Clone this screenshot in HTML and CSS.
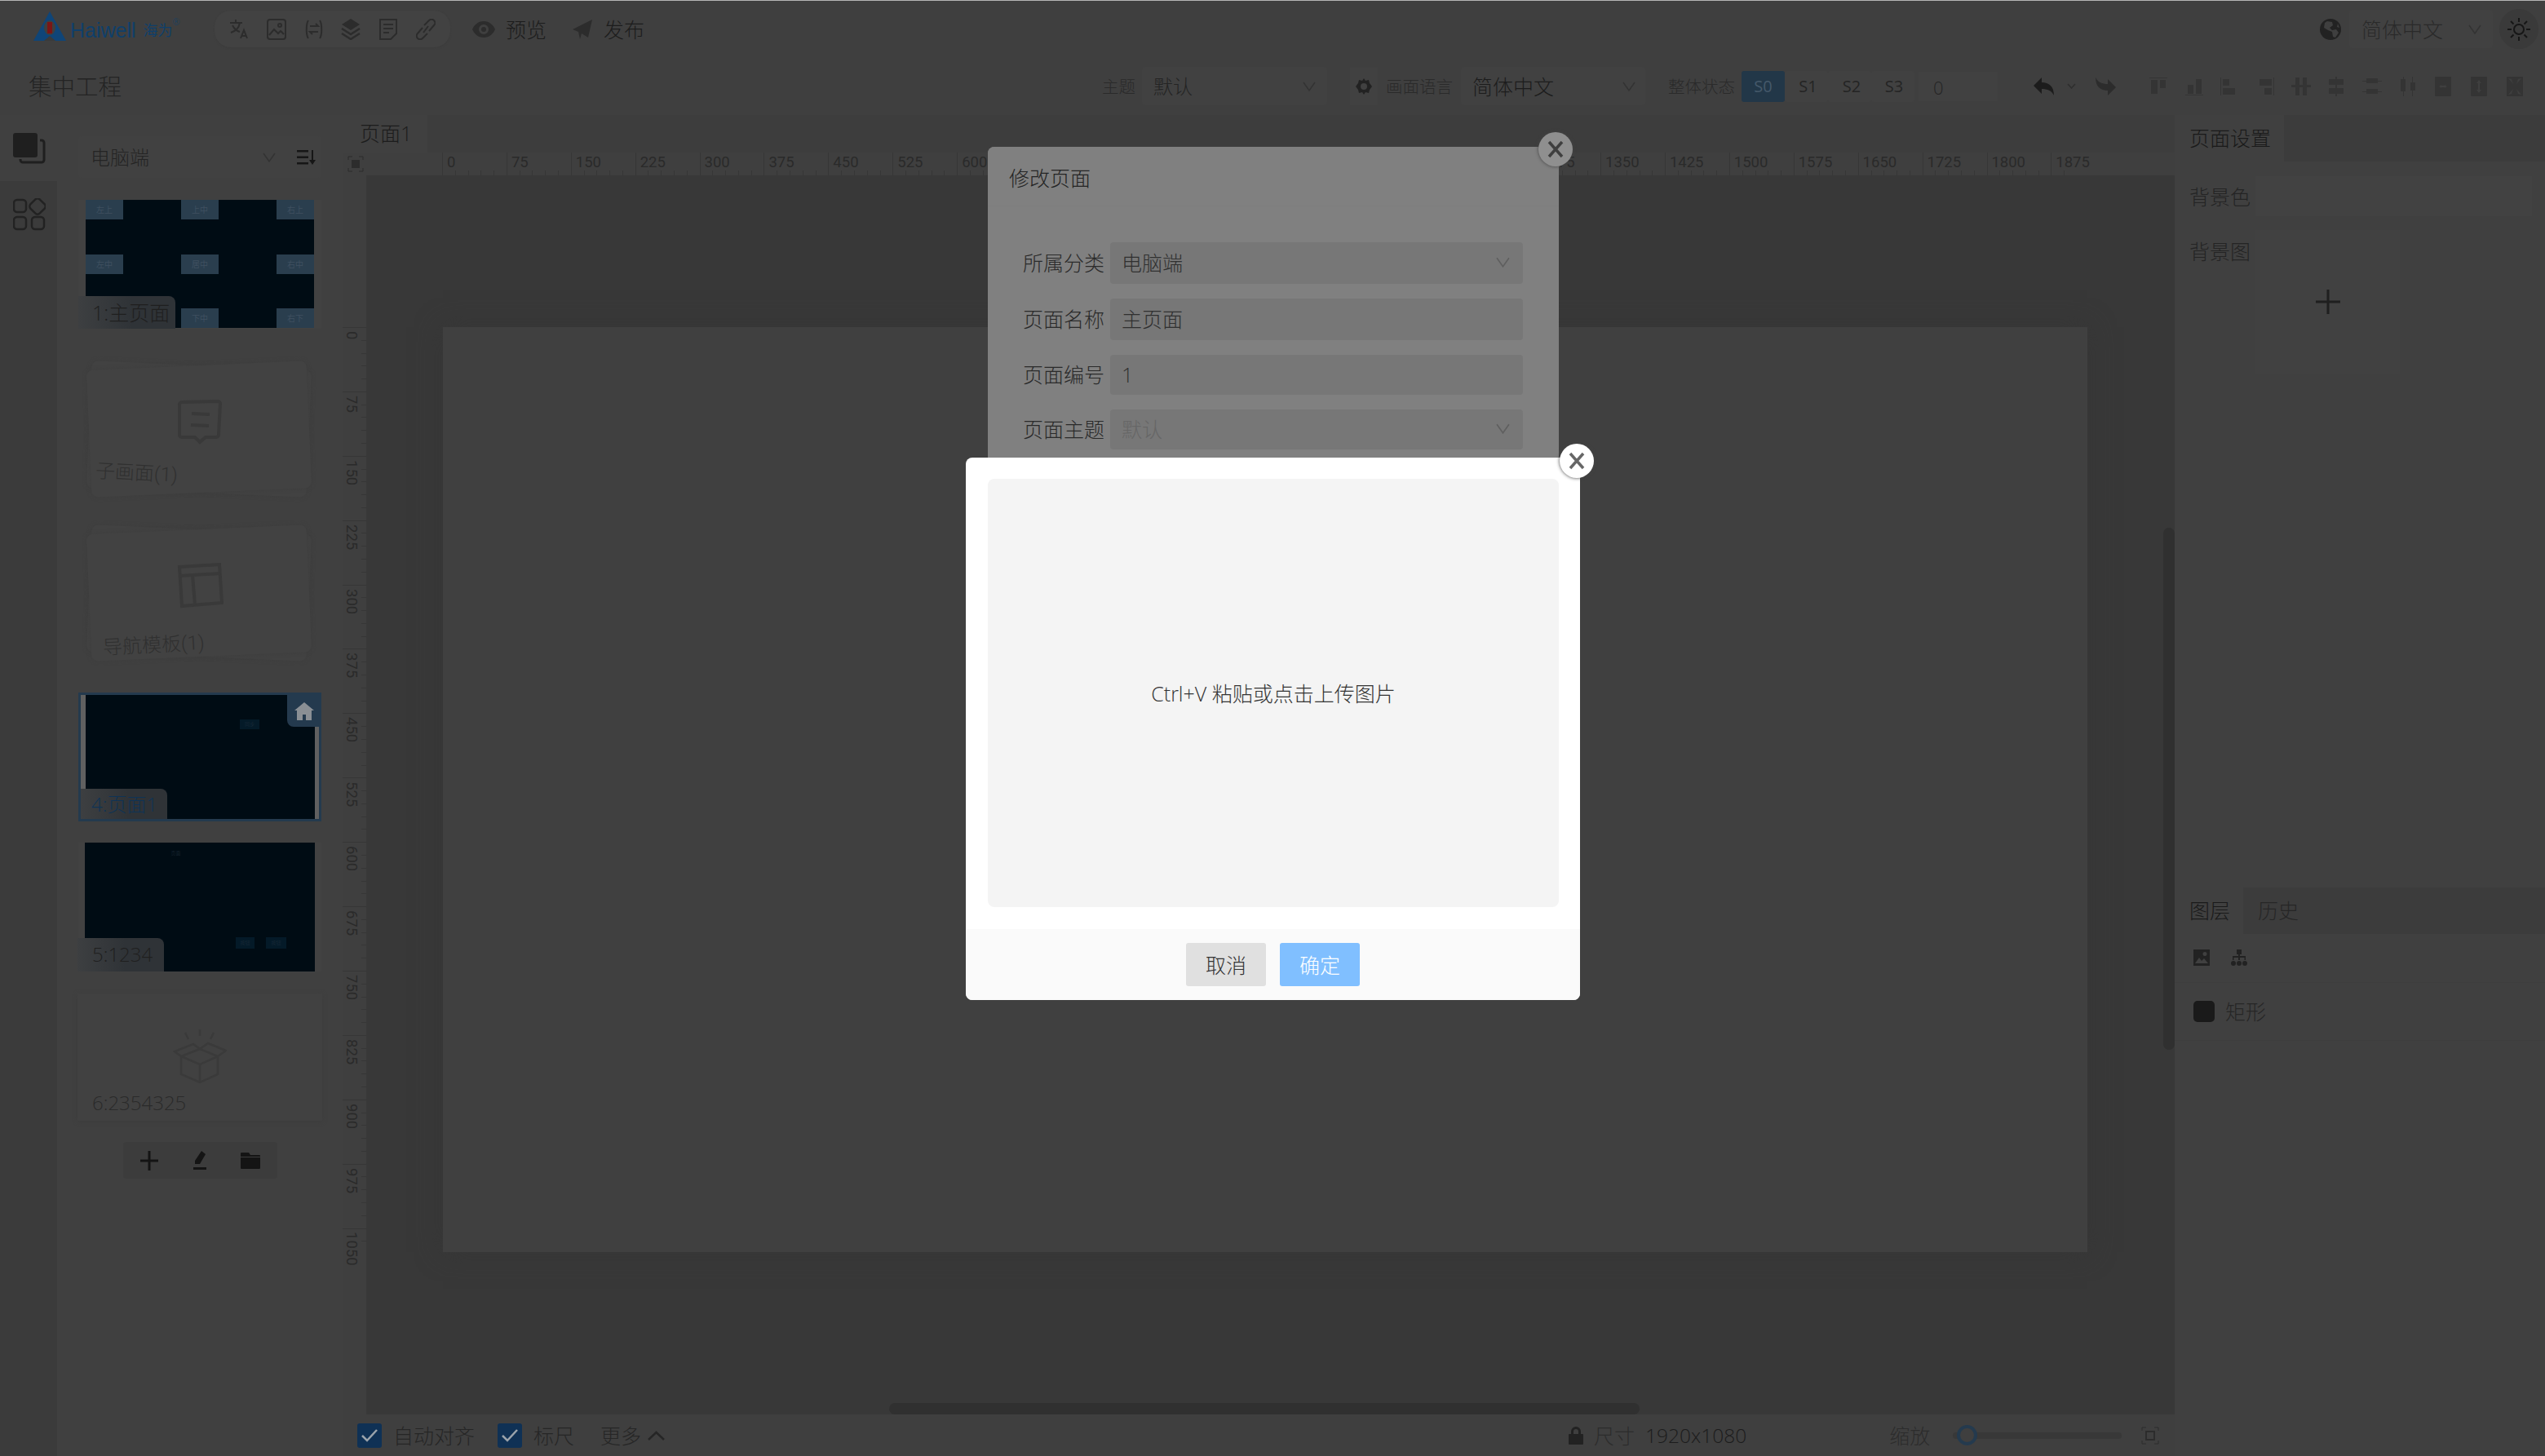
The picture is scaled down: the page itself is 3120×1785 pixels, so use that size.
FILE: index.html
```html
<!DOCTYPE html>
<html lang="zh">
<head>
<meta charset="utf-8">
<title>集中工程</title>
<link rel="stylesheet" href="styles.css">
</head>
<body>
<div class="app">

  <div class="topbar">
    <div class="logo">
      <svg class="logo-mark" width="40" height="40" viewBox="0 0 40 40"><path fill="#0f4578" d="M20 0 40 36H0z"/><path fill="#3a3a3a" d="M20 30 13 36h14z"/><ellipse cx="20" cy="20" rx="7" ry="9" fill="#3f3f3f"/><rect x="17" y="13" width="6" height="14" fill="#7a1616"/></svg>
      <span class="logo-en">Haiwell</span><span class="logo-cn">海为</span><sup class="logo-reg">®</sup>
    </div>
    <div class="tool-pill">
      <svg width="24" height="26" viewBox="0 0 24 26" class="ic-line"><path d="M1 5h15M8 1v4M13 5c-1 6-5 10-11 12M4 8c2 4 5 7 9 8"/><path d="M14 24l4-10 4 10M15.500 21h5"/></svg>
      <svg width="24" height="26" viewBox="0 0 24 26" class="ic-line"><rect x="1" y="1" width="22" height="24" rx="3"/><path d="M3 20l6-7 5 5 3-3 4 4"/><circle cx="16" cy="8" r="2"/></svg>
      <svg width="24" height="26" viewBox="0 0 24 26" class="ic-line"><path d="M5 2C2 6 2 20 5 24M19 2c3 4 3 18 0 22"/><path d="M7 9h10l-3-3M17 16H7l3 3"/></svg>
      <svg width="24" height="26" viewBox="0 0 24 26"><path fill="#2c2c2c" d="M12 0 23 7 12 14 1 7z"/><path fill="none" stroke="#2c2c2c" stroke-width="2.500" d="M1 12l11 7 11-7M1 18l11 7 11-7"/></svg>
      <svg width="24" height="26" viewBox="0 0 24 26" class="ic-line"><path d="M2 1h20v17l-7 7H2z"/><path d="M6 7h12M6 12h12M6 17h7"/></svg>
      <svg width="24" height="26" viewBox="0 0 24 26" class="ic-line"><path d="M10 8l6-6a4 4 0 0 1 6 6l-6 7M14 18l-6 6a4 4 0 0 1-6-6l6-7M9 17l6-8"/></svg>
    </div>
    <svg class="eye" width="28" height="20" viewBox="0 0 28 20"><path fill="#2c2c2c" fill-rule="evenodd" d="M14 0c7 0 12 5 14 10-2 5-7 10-14 10S2 15 0 10C2 5 7 0 14 0zm0 4a6 6 0 1 0 0 12 6 6 0 0 0 0-12zm0 3a3 3 0 1 1 0 6 3 3 0 0 1 0-6z"/></svg>
    <span class="top-link">预览</span>
    <svg class="send" width="24" height="24" viewBox="0 0 24 24"><path fill="#2c2c2c" d="M24 0 19 22 11 17 9 24 7 15 0 12z"/></svg>
    <span class="top-link send-text">发布</span>

    <svg class="globe" width="26" height="26" viewBox="0 0 26 26"><circle cx="13" cy="13" r="13" fill="#222"/><path fill="#3f3f3f" d="M9 3l6 1 1 4-4 3 3 3 5-1 3 4-4 6-3-1-1-6-5-2-5-3 1-6zM22 6l2 5-3-1z"/></svg>
    <div class="sel sel-lang"><span>简体中文</span><svg class="chev" width="16" height="12" viewBox="0 0 16 12"><path d="M1 1l7 10 7-10"/></svg></div>
    <div class="sun-wrap">
      <svg width="30" height="30" viewBox="0 0 30 30" class="ic-sun"><circle cx="15" cy="15" r="6"/><path d="M15 1v5M15 24v5M1 15h5M24 15h5M5 5l3.500 3.500M21.500 21.500 25 25M25 5l-3.500 3.500M8.500 21.500 5 25"/></svg>
    </div>
  </div>

  <div class="subbar">
    <span class="project">集中工程</span>
    <span class="bar-label theme-label">主题</span>
    <div class="sel sel-theme"><span>默认</span><svg class="chev" width="16" height="12" viewBox="0 0 16 12"><path d="M1 1l7 10 7-10"/></svg></div>
    <div class="gear-box"><svg width="20" height="20" viewBox="0 0 20 20"><path fill="#222" fill-rule="evenodd" d="M10 0l2 3 4-1 1 4 3 4-3 4-1 4-4-1-2 3-2-3-4 1-1-4-3-4 3-4 1-4 4 1zm0 6a4 4 0 1 0 0 8 4 4 0 0 0 0-8z"/></svg></div>
    <span class="bar-label lang-label">画面语言</span>
    <div class="sel sel-scr"><span>简体中文</span><svg class="chev" width="16" height="12" viewBox="0 0 16 12"><path d="M1 1l7 10 7-10"/></svg></div>
    <span class="bar-label state-label">整体状态</span>
    <div class="states">
      <span class="state on">S0</span><span class="state">S1</span><span class="state">S2</span><span class="state">S3</span>
    </div>
    <div class="num-input">0</div>
    <svg class="undo" width="25" height="22" viewBox="0 0 25 22"><path fill="#1c1c1c" d="M10 0v6c9 0 15 5 15 16-3-6-8-8-15-8v6L0 10z"/></svg>
    <svg class="caret" width="11" height="7" viewBox="0 0 11 7"><path fill="none" stroke="#2e2e2e" stroke-width="1.500" d="M1 1l4.500 5L10 1"/></svg>
    <svg class="redo" width="25" height="22" viewBox="0 0 25 22"><path fill="#2c2c2c" d="M15 22v-6C6 16 0 11 0 0c3 6 8 8 15 8V2l10 10z"/></svg>
    <div class="aligns">
      <svg width="22" height="22" viewBox="0 0 22 22"><path d="M0 0h22v1H0zM2 3h8v17H2zM13 3h7v10h-7z"/></svg>
      <svg width="22" height="22" viewBox="0 0 22 22"><path d="M0 21h22v1H0zM3 9h7v11H3zM13 2h7v18h-7z"/></svg>
      <svg width="22" height="22" viewBox="0 0 22 22"><path d="M0 0h1v22H0zM3 2h8v8H3zM3 13h15v8H3z"/></svg>
      <svg width="22" height="22" viewBox="0 0 22 22"><path d="M21 0h1v22h-1zM4 2h15v8H4zM10 13h9v8h-9z"/></svg>
      <svg width="24" height="22" viewBox="0 0 24 22"><path d="M0 9h24v3H0zM5 0h5v22H5zM14 0h5v22h-5z"/></svg>
      <svg width="22" height="24" viewBox="0 0 22 24"><path d="M10 0h2v24h-2zM2 3h18v7H2zM2 14h18v7H2z"/></svg>
      <svg width="24" height="22" viewBox="0 0 24 22"><path d="M0 4h24v1H0zM0 17h24v1H0zM5 1h14v6H5zM5 14h14v6H5z"/></svg>
      <svg width="18" height="24" viewBox="0 0 18 24"><path d="M3 0h1v24H3zM14 0h1v24h-1zM0 3h6v15H0zM12 7h6v10h-6z"/></svg>
      <svg width="20" height="24" viewBox="0 0 20 24"><path fill-rule="evenodd" d="M1 0h18a1 1 0 0 1 1 1v22a1 1 0 0 1-1 1H1a1 1 0 0 1-1-1V1a1 1 0 0 1 1-1zm4 12 3 2v-1h4v1l3-2-3-2v1H8v-1z"/></svg>
      <svg width="20" height="24" viewBox="0 0 20 24"><path fill-rule="evenodd" d="M1 0h18a1 1 0 0 1 1 1v22a1 1 0 0 1-1 1H1a1 1 0 0 1-1-1V1a1 1 0 0 1 1-1zm9 4-3 4h2v8H7l3 4 3-4h-2V8h2z"/></svg>
      <svg width="20" height="24" viewBox="0 0 20 24"><path fill-rule="evenodd" d="M0 0h20v24H0zm2 2 6 7-2-6zM18 2l-6 7 2-6zM2 22l6-7-2 6zM18 22l-6-7 2 6z"/></svg>
    </div>
  </div>

  <div class="main">
    <div class="rail">
      <div class="rail-item on">
        <svg width="40" height="38" viewBox="0 0 40 38"><rect x="0" y="0" width="30" height="30" rx="3" fill="#1f1f1f"/><path fill="none" stroke="#1f1f1f" stroke-width="3" d="M33 9h2a3 3 0 0 1 3 3v21a3 3 0 0 1-3 3H12a3 3 0 0 1-3-3v-1"/></svg>
      </div>
      <div class="rail-item">
        <svg width="40" height="40" viewBox="0 0 40 40" fill="none" stroke="#222" stroke-width="2.500"><rect x="1" y="2" width="15" height="15" rx="4"/><rect x="22" y="2" width="16" height="16" rx="4" transform="rotate(45 30 10)"/><rect x="1" y="23" width="15" height="15" rx="4"/><rect x="23" y="23" width="15" height="15" rx="4"/></svg>
      </div>
    </div>

    <div class="pages">
      <div class="pages-head">
        <div class="sel sel-cat"><span>电脑端</span><svg class="chev" width="16" height="12" viewBox="0 0 16 12"><path d="M1 1l7 10 7-10"/></svg>
          <svg class="sort" width="23" height="18" viewBox="0 0 23 18"><path fill="#161616" d="M0 0h14v2.500H0zM0 7.500h14V10H0zM0 15h14v2.500H0zM18 0h2v12h3l-4 6-4-6h3z"/></svg>
        </div>
      </div>

      <div class="thumb thumb-main">
        <div class="shot shot-grid">
          <b>左上</b><b>上中</b><b>右上</b><b>左中</b><b>居中</b><b>右中</b><b></b><b>下中</b><b>右下</b>
        </div>
        <span class="thumb-tag">1:主页面</span>
      </div>

      <div class="stack stack-sub">
        <div class="stack-face">
          <svg width="56" height="56" viewBox="0 0 56 56" fill="none" stroke="#393939" stroke-width="4"><path d="M6 3l44-1a3 3 0 0 1 3 3l-2 38a3 3 0 0 1-3 3H35l-7 6-6-6H6a3 3 0 0 1-3-3L3 6a3 3 0 0 1 3-3z"/><path d="M18 17l22 1M17 31l22 1"/></svg>
          <span class="stack-label">子画面(1)</span>
        </div>
      </div>

      <div class="stack stack-nav">
        <div class="stack-face">
          <svg width="58" height="56" viewBox="0 0 58 56" fill="none" stroke="#393939" stroke-width="4"><path d="M4 5l49-3 3 47-49 4z"/><path d="M4 16l50-3M20 15l3 37"/></svg>
          <span class="stack-label">导航模板(1)</span>
        </div>
      </div>

      <div class="thumb thumb-sel">
        <div class="shot shot-four"><i class="chip chip-a">同步</i></div>
        <div class="home-badge"><svg width="24" height="22" viewBox="0 0 24 22"><path fill="#8a8f94" d="M12 0 24 10h-3v12H14v-7h-4v7H3V10H0z"/></svg></div>
        <span class="thumb-tag tag-blue">4:页面1</span>
      </div>

      <div class="thumb thumb-five">
        <div class="shot shot-five"><i class="chip chip-b">页面</i><i class="chip chip-c">按钮</i><i class="chip chip-d">按钮</i></div>
        <span class="thumb-tag">5:1234</span>
      </div>

      <div class="thumb-empty">
        <svg width="66" height="66" viewBox="0 0 66 66" fill="none" stroke="#3a3a3a" stroke-width="2.500"><path d="M33 0v8M15 4l4 8M50 4l-4 8"/><path d="M33 24 10 33v22l23 10 22-10V33zM10 33l23 10 22-10M33 43v22M33 24l-8-6-23 9 8 6M33 24l10-7 22 9-10 7"/></svg>
        <span class="empty-label">6:2354325</span>
      </div>

      <div class="page-tools">
        <svg width="22" height="24" viewBox="0 0 22 24"><path fill="#141414" d="M9.500 0h3v10.500H22v3h-9.500V24h-3V13.500H0v-3h9.500z"/></svg>
        <svg width="18" height="24" viewBox="0 0 18 24"><path fill="#141414" d="M11 0l5 4-7 12H3l0-4zM1 20h16v3H1z"/></svg>
        <svg width="24" height="20" viewBox="0 0 24 20"><path fill="#141414" d="M1 0h9l2 3h11a1 1 0 0 1 1 1v1H0V1a1 1 0 0 1 1-1zM0 6h24v13a1 1 0 0 1-1 1H1a1 1 0 0 1-1-1z"/></svg>
      </div>
    </div>

    <div class="center">
      <div class="tabs-row"><span class="doc-tab">页面1</span></div>
      <div class="hruler">
        <svg class="corner" width="20" height="20" viewBox="0 0 20 20"><rect x="5" y="5" width="10" height="10" fill="#2c2c2c"/><path fill="none" stroke="#2c2c2c" d="M1 5V1h5M14 1h5v4M19 15v4h-5M6 19H1v-4"/></svg>
        <div class="hruler-track">
          <span>0</span><span>75</span><span>150</span><span>225</span><span>300</span><span>375</span><span>450</span><span>525</span><span>600</span><span>675</span><span>750</span><span>825</span><span>900</span><span>975</span><span>1050</span><span>1125</span><span>1200</span><span>1275</span><span>1350</span><span>1425</span><span>1500</span><span>1575</span><span>1650</span><span>1725</span><span>1800</span><span>1875</span>
        </div>
      </div>
      <div class="work">
        <div class="vruler">
          <div class="vruler-track">
            <span>0</span><span>75</span><span>150</span><span>225</span><span>300</span><span>375</span><span>450</span><span>525</span><span>600</span><span>675</span><span>750</span><span>825</span><span>900</span><span>975</span><span>1050</span>
          </div>
        </div>
        <div class="canvas"><div class="sheet"></div></div>
        <div class="scroll-v"></div>
        <div class="scroll-h"></div>
      </div>
      <div class="status">
        <span class="check"><svg width="20" height="16" viewBox="0 0 20 16"><path fill="none" stroke="#9aa3ab" stroke-width="2.500" d="M1 8l6 6L19 1"/></svg></span>
        <span class="status-text">自动对齐</span>
        <span class="check check-two"><svg width="20" height="16" viewBox="0 0 20 16"><path fill="none" stroke="#9aa3ab" stroke-width="2.500" d="M1 8l6 6L19 1"/></svg></span>
        <span class="status-text">标尺</span>
        <span class="status-text more">更多</span>
        <svg class="more-caret" width="21" height="12" viewBox="0 0 21 12"><path fill="none" stroke="#262626" stroke-width="2.500" d="M1 11 10.500 2 20 11"/></svg>
        <svg class="lock" width="18" height="22" viewBox="0 0 18 22"><path fill="#222" fill-rule="evenodd" d="M9 0a6 6 0 0 1 6 6v3h2a1 1 0 0 1 1 1v11a1 1 0 0 1-1 1H1a1 1 0 0 1-1-1V10a1 1 0 0 1 1-1h2V6a6 6 0 0 1 6-6zm0 3a3 3 0 0 0-3 3v3h6V6a3 3 0 0 0-3-3z"/></svg>
        <span class="status-text dim size-label">尺寸</span>
        <span class="status-text size-val">1920x1080</span>
        <span class="status-text dim zoom-label">缩放</span>
        <div class="zoom-track"><span class="zoom-thumb"></span></div>
        <svg class="fit" width="22" height="22" viewBox="0 0 22 22"><rect x="6" y="6" width="10" height="10" fill="none" stroke="#2c2c2c" stroke-width="2"/><path fill="none" stroke="#2c2c2c" d="M1 5V1h5M16 1h5v4M21 17v4h-5M6 21H1v-4"/></svg>
      </div>
    </div>

    <div class="props">
      <div class="props-tabs"><span class="props-tab">页面设置</span></div>
      <div class="prop-row prop-color"><span class="prop-name">背景色</span><div class="color-box"></div></div>
      <div class="prop-row prop-image"><span class="prop-name">背景图</span>
        <div class="upload-box"><svg width="30" height="30" viewBox="0 0 30 30"><path fill="#1f1f1f" d="M13.500 0h3v13.500H30v3H16.500V30h-3V16.500H0v-3h13.500z"/></svg></div>
      </div>
      <div class="layer-tabs"><span class="props-tab small on">图层</span><span class="props-tab small">历史</span></div>
      <div class="layer-tools">
        <svg width="20" height="20" viewBox="0 0 20 20"><path fill="#222" fill-rule="evenodd" d="M0 0h20v20H0zm14 3a2.500 2.500 0 1 0 0 5 2.500 2.500 0 0 0 0-5zM2 17h16l-5-6-3 3-3-4z"/></svg>
        <svg width="20" height="20" viewBox="0 0 20 20"><path fill="#222" d="M7 0h6v6h-2v2h7v5h-1.500V10H11v3H9v-3H3.500v3H2V8h7V6H7z"/><circle cx="3" cy="17" r="3" fill="#222"/><circle cx="10" cy="17" r="3" fill="#222"/><circle cx="17" cy="17" r="3" fill="#222"/></svg>
      </div>
      <div class="layer-row"><span class="swatch"></span><span class="layer-name">矩形</span></div>
    </div>
  </div>
</div>

<div class="modal modal-edit">
  <div class="modal-head">修改页面</div>
  <div class="modal-form">
    <div class="form-row row-one"><label>所属分类</label><div class="field"><span>电脑端</span><svg class="chev" width="17" height="13" viewBox="0 0 16 12"><path d="M1 1l7 10 7-10"/></svg></div></div>
    <div class="form-row"><label>页面名称</label><div class="field"><span>主页面</span></div></div>
    <div class="form-row row-three"><label>页面编号</label><div class="field"><span>1</span></div></div>
    <div class="form-row row-four"><label>页面主题</label><div class="field off"><span>默认</span><svg class="chev" width="17" height="13" viewBox="0 0 16 12"><path d="M1 1l7 10 7-10"/></svg></div></div>
  </div>
</div>
<div class="close close-edit"><svg width="22" height="22" viewBox="0 0 22 22"><path fill="none" stroke="#3f3f3f" stroke-width="3.500" d="M3 2l16 18M19 2 3 20"/></svg></div>

<div class="modal modal-upload">
  <div class="drop-zone">Ctrl+V 粘贴或点击上传图片</div>
  <div class="modal-foot">
    <button class="btn">取消</button>
    <button class="btn primary">确定</button>
  </div>
</div>
<div class="close close-upload"><svg width="22" height="22" viewBox="0 0 22 22"><path fill="none" stroke="#666" stroke-width="3.500" d="M3 2l16 18M19 2 3 20"/></svg></div>
</body>
</html>
```

FILE: styles.css
```css
* { box-sizing: border-box; }
html, body { margin: 0; height: 100%; overflow: hidden; }
body {
  background: #404040;
  color: #242424;
  font-family: "Open Sans", "Noto Sans CJK SC", sans-serif;
  font-size: 25px;
  font-weight: 300;
  line-height: 30px;
}
svg { display: block; flex: none; }
.ic-line { fill: none; stroke: #2c2c2c; stroke-width: 2; }
.ic-sun { fill: none; stroke: #161616; stroke-width: 2; }
.chev { fill: none; stroke: #333; stroke-width: 1.500; }

.app { height: 1785px; display: flex; flex-direction: column; }

/* top bars */
.topbar {
  height: 70px;
  display: flex;
  align-items: center;
  padding-left: 41px;
  background: #3f3f3f;
  border-top: 1px solid #b5b5b5;
}
.logo { width: 190px; display: flex; align-items: center; height: 40px; margin-top: -4px; }
.logo-en { font-family: "Liberation Sans", sans-serif; font-weight: 400; font-size: 25px; color: #0f3f6a; margin-left: 5px; margin-top: 6px; }
.logo-cn { font-size: 18px; font-weight: 400; color: #0f3f6a; margin-left: 9px; margin-top: 6px; }
.logo-reg { font-size: 11px; color: #0f3f6a; line-height: 12px; margin-top: -14px; }
.tool-pill {
  width: 289px;
  height: 45px;
  margin-left: 32px;
  padding: 0 18px;
  display: flex;
  align-items: center;
  justify-content: space-between;
  background: #424242;
  border-radius: 20px;
  box-shadow: 0 1px 2px #3c3c3c;
}
.eye { margin-left: 27px; }
.top-link { margin-left: 13px; width: 50px; color: #1c1c1c; }
.send { margin-left: 32px; }
.send-text { margin-left: 14px; }
.globe { margin-left: auto; }
.sel {
  display: flex;
  align-items: center;
  justify-content: space-between;
  background: #414141;
  border-radius: 4px;
  color: #242424;
}
.sel-lang { width: 176px; height: 47px; margin-left: 10px; padding: 0 14px 0 15px; color: #2a2a2a; }
.sun-wrap {
  width: 48px;
  height: 49px;
  margin-left: 8px;
  margin-right: 8px;
  border-radius: 50%;
  background: #3a3a3a;
  display: flex;
  align-items: center;
  justify-content: center;
}

.subbar {
  height: 71px;
  display: flex;
  align-items: center;
  padding-left: 35px;
  background: #3f3f3f;
}
.project { font-size: 28.500px; color: #242424; width: 1316px; }
.bar-label { font-size: 20.500px; color: #2a2a2a; }
.sel-theme { width: 227px; height: 47px; margin-left: 8px; padding: 0 14px; font-size: 24px; }
.gear-box { width: 34px; height: 46px; margin-left: 28px; display: flex; align-items: center; justify-content: center; background: #414141; }
.lang-label { margin-left: 10px; }
.sel-scr { width: 226px; height: 47px; margin-left: 10px; padding: 0 12px 0 14px; color: #1c1c1c; }
.state-label { margin-left: 28px; }
.states { display: flex; margin-left: 8px; font-size: 20px; font-weight: 400; color: #242424; }
.state { width: 53px; height: 38px; line-height: 38px; text-align: center; border-radius: 3px; background: #414141; }
.state:nth-child(2) { padding-left: 4px; }
.state:nth-child(3) { padding-left: 5px; }
.state:nth-child(4) { padding-left: 3px; }
.state.on { background: #223748; color: #45596a; }
.num-input { width: 97px; height: 36px; margin-left: 5px; padding-left: 18px; background: #414141; line-height: 38px; font-size: 22px; color: #242424; }
.undo { margin-left: 44px; }
.caret { margin-left: 16px; }
.redo { margin-left: 24px; }
.aligns {
  margin-left: 30px;
  display: grid;
  grid-template-columns: repeat(11, 43.700px);
  align-items: center;
  justify-items: center;
  fill: #343434;
}

.main { flex: 1; min-height: 0; display: flex; }

/* left rail */
.rail { width: 70px; background: #3b3b3b; }
.rail-item { height: 81px; display: flex; align-items: center; justify-content: center; padding-left: 2px; }
.rail-item.on { background: #404040; }

/* page list */
.pages { width: 350px; background: #404040; }
.pages-head { padding: 26px 0 0 26px; height: 104px; }
.sel-cat { width: 298px; height: 51px; padding: 0 7px 0 15px; background: #414141; font-size: 24px; }
.sel-cat span { flex: 1; }
.sel-cat .sort { margin-left: 26px; }

.thumb { position: relative; width: 298px; height: 158px; margin-left: 26px; background: #424242; }
.shot { position: absolute; background: #000c14; }
.shot-grid {
  left: 9px;
  top: 0;
  width: 280px;
  height: 157px;
  display: grid;
  grid-template-columns: repeat(3, 46px);
  grid-template-rows: repeat(3, 24px);
  justify-content: space-between;
  align-content: space-between;
}
.shot-grid b {
  background: #2a3e4e;
  color: #3f5060;
  font-size: 10px;
  font-weight: 400;
  line-height: 24px;
  text-align: center;
}
.thumb-tag {
  position: absolute;
  left: 0;
  bottom: 0;
  width: 119px;
  height: 40px;
  padding-left: 17px;
  line-height: 40px;
  color: #1f1f1f;
  background: linear-gradient(90deg, #3d3f41, #2f3337 55%);
  border-radius: 0 8px 0 0;
}
.thumb-main { margin-bottom: 36px; }

.stack { position: relative; width: 290px; height: 174px; margin-left: 30px; }
.stack::before, .stack::after {
  content: "";
  position: absolute;
  left: 9px;
  top: 9px;
  width: 270px;
  height: 156px;
  background: #424242;
  border-radius: 8px;
  box-shadow: 0 0 5px #3e3e3e;
}
.stack::before { transform: rotate(2.500deg); }
.stack::after { transform: rotate(-2.500deg); }
.stack-sub { margin-bottom: 27px; }
.stack-nav { margin-bottom: 35px; }
.stack-face {
  position: relative;
  z-index: 1;
  height: 174px;
  display: flex;
  flex-direction: column;
  align-items: center;
  padding-top: 51px;
  color: #303030;
}
.stack-label { position: absolute; white-space: nowrap; font-size: 24px; font-family: Roboto, "Noto Sans CJK SC", sans-serif; }
.stack-sub .stack-label { left: 17px; bottom: 18px; transform: rotate(3deg); }
.stack-nav .stack-label { left: 26px; bottom: 8px; transform: rotate(-3deg); }
.stack-nav .stack-face { padding-top: 50px; }

.thumb-sel { height: 158px; border: 3px solid #243a4e; background: #606060; margin-bottom: 26px; }
.shot-four { left: 6px; top: 0; width: 281px; height: 152px; }
.home-badge {
  position: absolute;
  right: -3px;
  top: 0;
  width: 42px;
  height: 39px;
  background: #243a4e;
  border-radius: 0 0 0 8px;
  display: flex;
  align-items: center;
  justify-content: center;
}
.thumb-sel .thumb-tag { left: 0; bottom: 0; width: 106px; height: 37px; padding-left: 13px; line-height: 37px; font-size: 24px; }
.thumb-sel .tag-blue { color: #0f3355; }
.chip { position: absolute; display: block; background: #041a28; color: #20303e; font-size: 6px; line-height: 12px; font-style: normal; text-align: center; }
.chip-a { left: 189px; top: 30px; width: 24px; height: 12px; }
.thumb-five { margin-bottom: 27px; }
.shot-five { left: 8px; top: 0; width: 282px; height: 158px; }
.chip-b { left: 103px; top: 10px; width: 17px; height: 6px; line-height: 6px; background: none; }
.chip-c { left: 185px; top: 116px; width: 23px; height: 14px; line-height: 14px; }
.chip-d { left: 222px; top: 116px; width: 25px; height: 14px; line-height: 14px; }
.thumb-five .thumb-tag { left: -1px; width: 106px; height: 41px; padding-left: 18px; font-size: 24px; }

.thumb-empty {
  position: relative;
  width: 300px;
  height: 156px;
  margin-left: 25px;
  padding-top: 44px;
  display: flex;
  justify-content: center;
  background: #414141;
  box-shadow: 0 1px 5px #3c3c3c;
}
.empty-label { position: absolute; left: 18px; bottom: 7px; font-size: 24px; color: #2a2a2a; }
.page-tools {
  width: 189px;
  height: 45px;
  margin: 26px 0 0 81px;
  padding: 0 21px;
  display: flex;
  align-items: center;
  justify-content: space-between;
  background: #3c3c3c;
  border-radius: 4px;
}

/* centre column */
.center { flex: 1; min-width: 0; display: flex; flex-direction: column; }
.tabs-row { height: 46px; background: #3d3d3d; }
.doc-tab { display: block; width: 104px; height: 46px; padding-left: 21px; line-height: 45px; background: #404040; color: #1c1c1c; }
.hruler { height: 28px; display: flex; background: #3f3f3f; }
.corner { margin: 4px 0 0 6px; }
.hruler-track {
  width: 2001px;
  margin-left: 96px;
  display: flex;
  background:
    repeating-linear-gradient(90deg, #363636 0 1px, transparent 1px 78.900px),
    repeating-linear-gradient(90deg, #363636 0 1px, transparent 1px 15.780px) 0 100% / 100% 6px no-repeat;
}
.hruler-track span {
  flex: 0 0 78.900px;
  padding-left: 6px;
  font-family: Roboto, sans-serif;
  font-size: 18.500px;
  font-weight: 400;
  line-height: 25px;
  color: #2a2a2a;
}
.work { position: relative; flex: 1; min-height: 0; display: flex; }
.vruler { width: 29px; padding-top: 186px; background: #3f3f3f; }
.vruler-track {
  height: 1135px;
  background:
    repeating-linear-gradient(180deg, #363636 0 1px, transparent 1px 78.900px),
    repeating-linear-gradient(180deg, #363636 0 1px, transparent 1px 15.780px) 100% 0 / 6px 100% no-repeat;
}
.vruler-track span {
  display: block;
  height: 78.900px;
  padding: 5px 0 0 0;
  writing-mode: vertical-rl;
  font-family: Roboto, sans-serif;
  font-size: 18.500px;
  font-weight: 400;
  line-height: 36px;
  width: 29px;
  color: #2a2a2a;
}
.canvas { flex: 1; padding: 186px 107px 0 94px; background: #383838; }
.sheet { height: 1134px; background: #404040; box-shadow: 0 0 30px #363636; }
.scroll-v { position: absolute; right: 0; top: 432px; width: 14px; height: 640px; background: #303030; border-radius: 7px; }
.scroll-h { position: absolute; left: 670px; bottom: 0; width: 920px; height: 14px; background: #303030; border-radius: 7px; }

.status { height: 51px; display: flex; align-items: center; background: #3f3f3f; padding-left: 18px; }
.check { width: 30px; height: 30px; border-radius: 3px; background: #0f3155; display: flex; align-items: center; justify-content: center; }
.status-text { margin-left: 14px; line-height: 30px; color: #262626; }
.check-two { margin-left: 28px; }
.more { margin-left: 32px; }
.more-caret { margin-left: 8px; }
.lock { margin-left: 1108px; }
.dim { color: #2c2c2c; }
.size-label { margin-left: 13px; }
.size-val { margin-left: 13px; font-size: 24.500px; color: #1c1c1c; }
.zoom-label { margin-left: 175px; }
.zoom-track { position: relative; width: 207px; height: 8px; margin-left: 28px; border-radius: 4px; background: #383838; }
.zoom-thumb { position: absolute; left: 5px; top: -9px; width: 25px; height: 25px; border: 4px solid #243a4e; border-radius: 50%; background: #3f3f3f; }
.fit { margin-left: 24px; }

/* right panel */
.props { width: 454px; background: #404040; }
.props-tabs { height: 57px; background: #3c3c3c; }
.props-tab { display: block; width: 134px; height: 57px; padding-left: 18px; line-height: 57px; background: #404040; color: #1a1a1a; }
.prop-row { display: flex; padding-left: 18px; }
.prop-name { width: 81px; color: #242424; }
.prop-color { margin-top: 18px; height: 49px; align-items: center; }
.color-box { width: 339px; height: 49px; background: #424242; }
.prop-image { margin-top: 17px; }
.prop-image .prop-name { margin-top: 11px; }
.upload-box { width: 177px; height: 176px; display: flex; align-items: center; justify-content: center; background: #414141; }
.layer-tabs { display: flex; margin-top: 630px; height: 57px; background: #3c3c3c; }
.props-tab.small { width: 84px; background: none; color: #262626; }
.props-tab.small.on { background: #404040; color: #1a1a1a; }
.props-tab.small + .props-tab.small { padding-left: 18px; }
.layer-tools { height: 60px; display: flex; align-items: center; gap: 26px; padding: 0 0 1px 23px; border-bottom: 1px solid #3d3d3d; }
.layer-row { height: 71px; display: flex; align-items: center; padding-left: 23px; border-bottom: 1px solid #3d3d3d; }
.swatch { width: 26px; height: 26px; border-radius: 5px; background: #1a1a1a; }
.layer-name { margin-left: 13px; color: #262626; }

/* modals, they sit over the whole page */
.modal { position: absolute; border-radius: 8px; }
.modal-edit { left: 1211px; top: 180px; width: 700px; height: 420px; background: #808080; }
.modal-head { height: 73px; padding: 23px 0 0 26px; color: #242424; background: #808080; border-bottom: 1px solid #7e7e7e; border-radius: 8px 8px 0 0; }
.modal-form { padding: 44px 44px 0 43px; }
.form-row { display: flex; align-items: center; margin-bottom: 18px; }
.form-row label { width: 107px; padding-bottom: 2px; color: #2a2a2a; }
.field { flex: 1; height: 51px; display: flex; align-items: center; justify-content: space-between; padding: 0 16px 2px 14px; border-radius: 4px; background: #777; color: #303030; }
.row-three { margin-bottom: 18px; }
.row-three .field { height: 49px; }
.row-four .field { height: 49px; }
.field.off span { color: #666; }
.field .chev { stroke: #5f5f5f; }

.close { position: absolute; width: 42px; height: 42px; border-radius: 50%; display: flex; align-items: center; justify-content: center; }
.close-edit { left: 1886px; top: 162px; background: #8f8f8f; box-shadow: 0 0 4px #444; }
.close-upload { left: 1912px; top: 544px; background: #fff; box-shadow: 0 0 4px #444; }

.modal-upload { left: 1184px; top: 561px; width: 753px; height: 665px; padding-top: 26px; background: #fff; overflow: hidden; }
.drop-zone { width: 700px; height: 525px; margin-left: 27px; display: flex; align-items: center; justify-content: center; border-radius: 8px; background: #f4f4f4; color: #333; }
.modal-foot { height: 87px; margin-top: 27px; display: flex; justify-content: center; align-items: flex-start; gap: 17px; padding-top: 17px; background: #fafafa; }
.btn { width: 98px; height: 53px; border: 0; border-radius: 3px; background: #e0e0e0; color: #333; font: inherit; padding: 0; }
.btn.primary { background: #80bfff; color: #fff; }
```
